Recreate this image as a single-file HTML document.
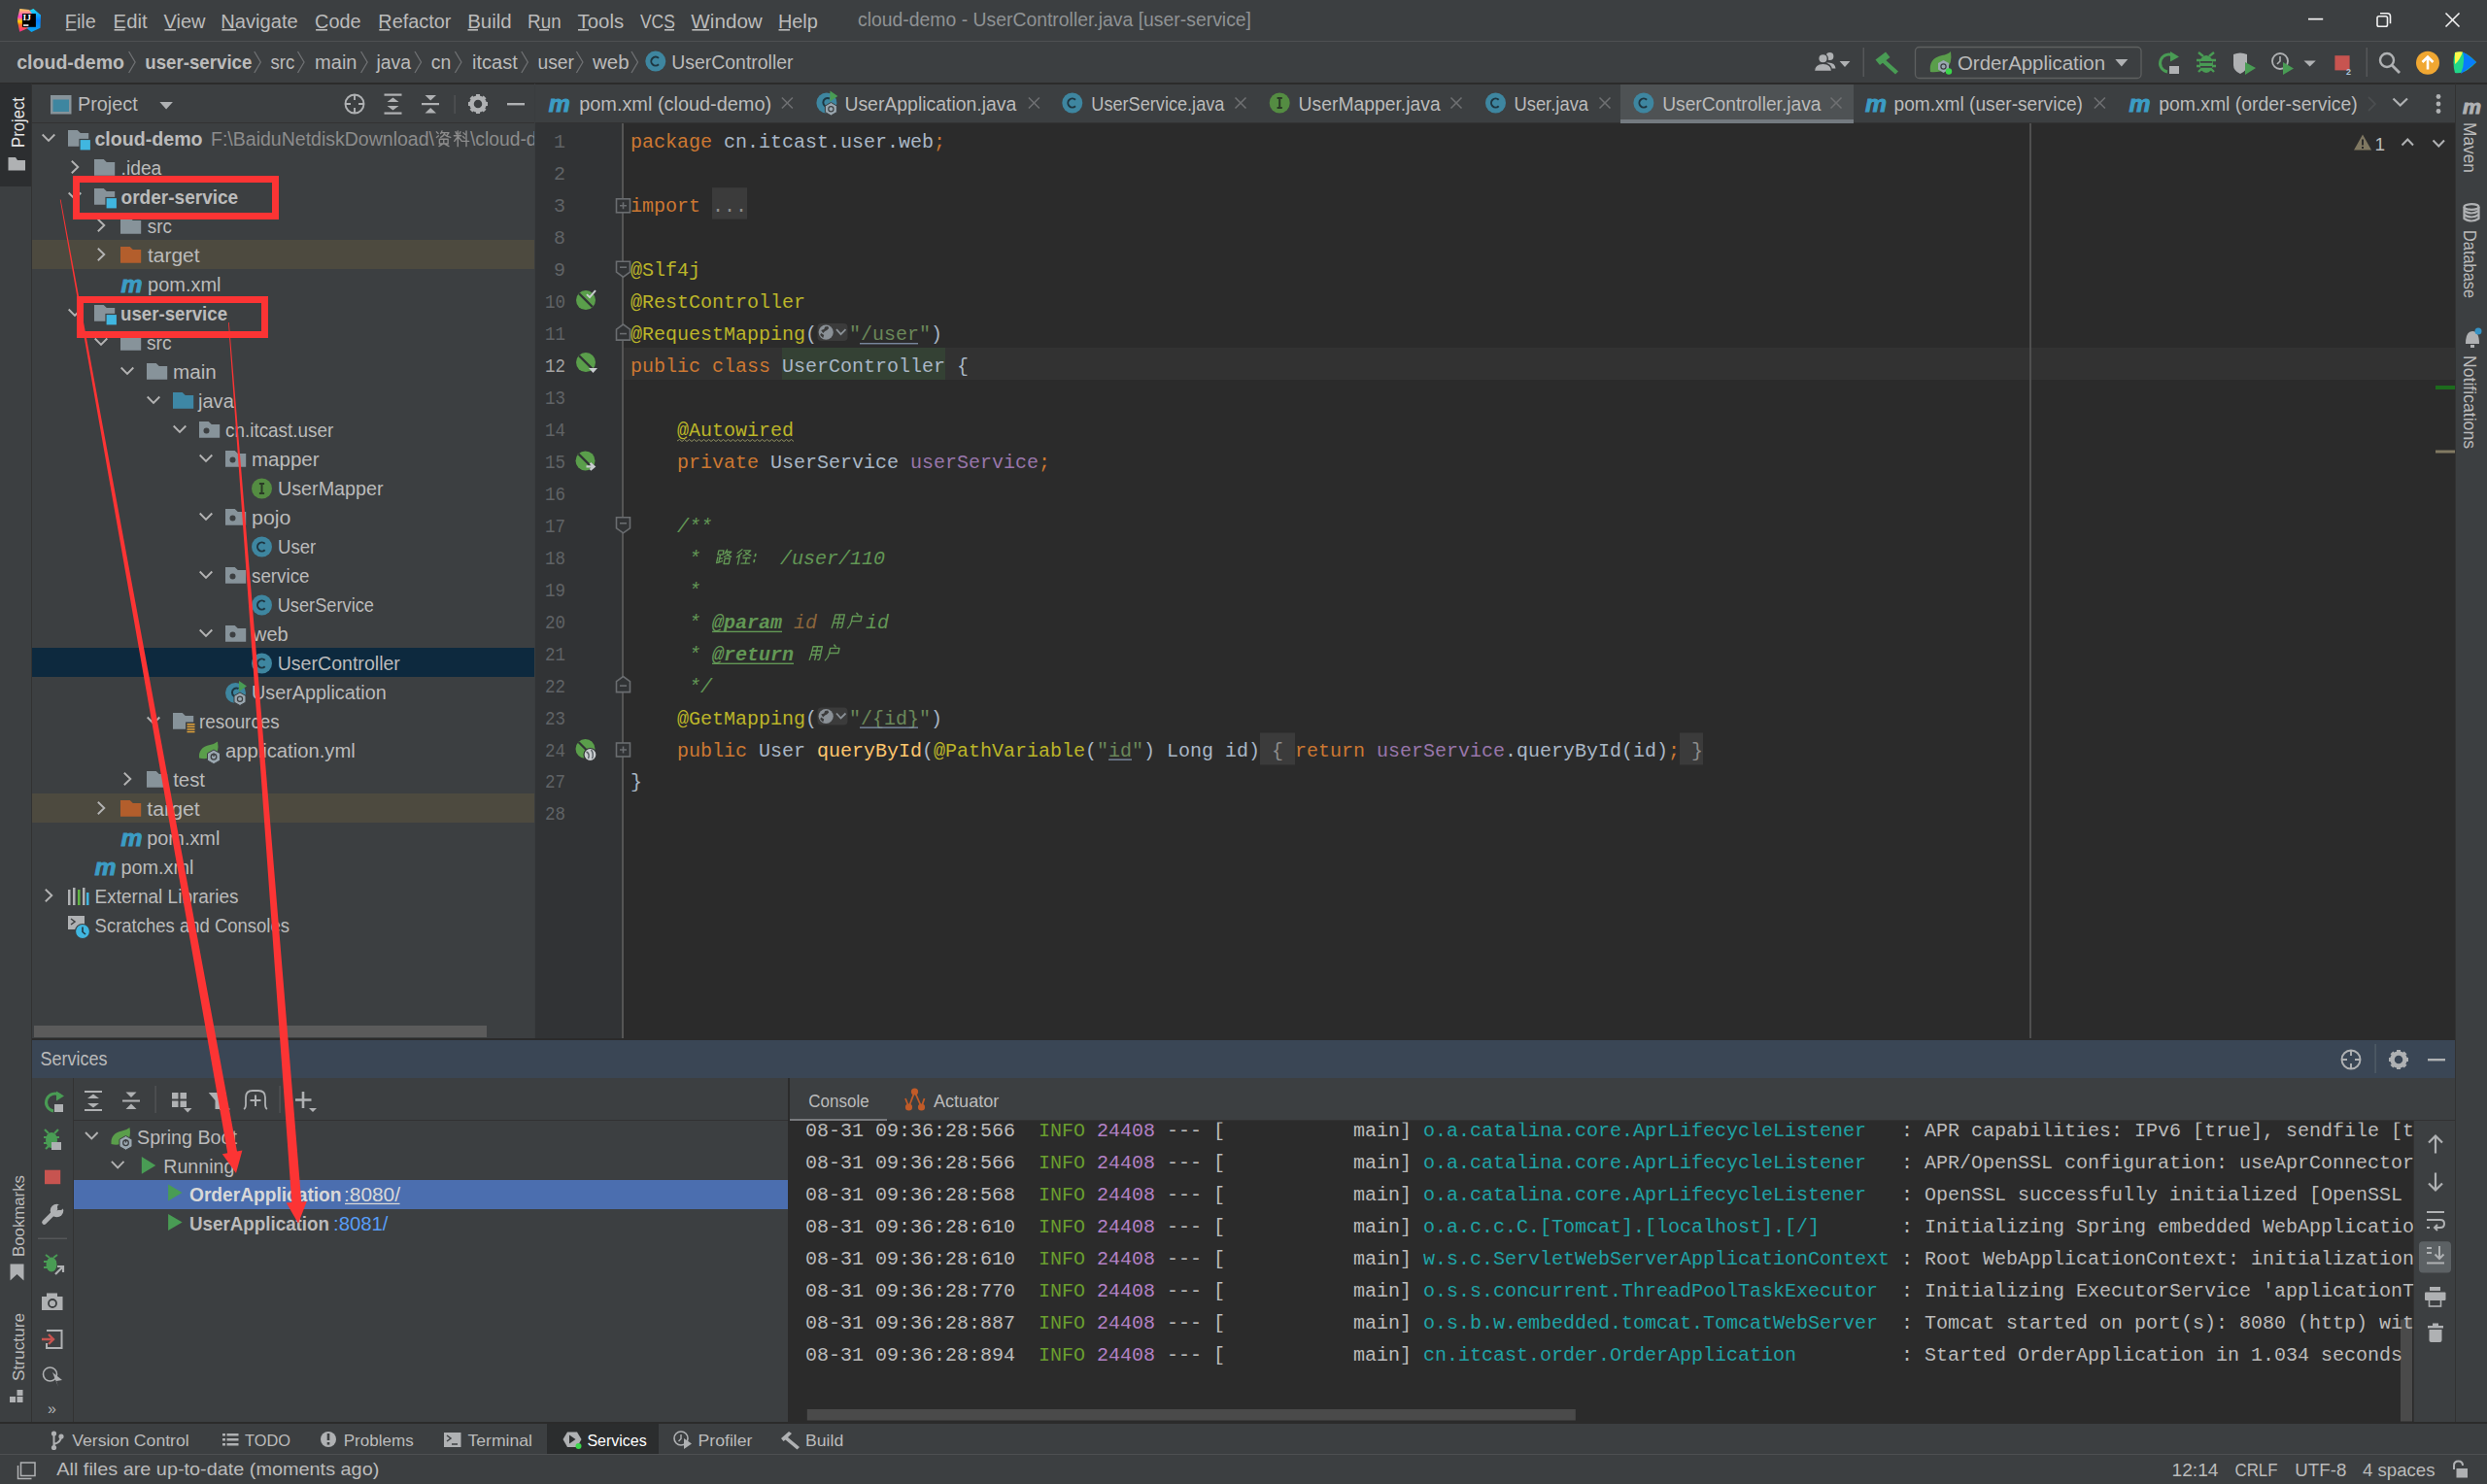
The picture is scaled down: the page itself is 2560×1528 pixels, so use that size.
<!DOCTYPE html>
<html><head><meta charset="utf-8"><title>IntelliJ</title>
<style>
html,body{margin:0;padding:0;background:#3C3F41;overflow:hidden}
svg{display:block}
.s{font-family:"Liberation Sans",sans-serif;white-space:pre}
.m{font-family:"Liberation Mono",monospace;white-space:pre}
</style></head>
<body>
<svg width="2560" height="1528" viewBox="0 0 2560 1528">
<rect x="0" y="0" width="2560" height="1528" fill="#3C3F41" />
<rect x="0" y="42" width="2560" height="1" fill="#4E5052" />
<rect x="0" y="85" width="2560" height="2" fill="#2B2B2B" />
<rect x="32" y="86" width="1" height="1379" fill="#323232" />
<rect x="0" y="86" width="32" height="106" fill="#2C2E30" />
<rect x="2527" y="86" width="1" height="1379" fill="#323232" />
<rect x="33" y="126" width="517" height="1" fill="#323232" />
<rect x="550" y="86" width="1" height="983" fill="#3A3D3F" />
<rect x="551" y="126" width="1976" height="1" fill="#323232" />
<rect x="551" y="127" width="1976" height="942" fill="#2B2B2B" />
<rect x="551" y="127" width="89" height="942" fill="#313335" />
<rect x="640" y="127" width="2" height="942" fill="#555555" />
<rect x="642" y="358" width="1885" height="33" fill="#323232" />
<rect x="2089" y="127" width="2" height="942" fill="#4F4F4F" />
<rect x="33" y="1069" width="2494" height="2" fill="#2B2B2B" />
<rect x="33" y="1071" width="2494" height="39" fill="#3A4655" />
<rect x="0" y="1464" width="2560" height="2" fill="#2B2B2B" />
<rect x="0" y="1497" width="2560" height="1" fill="#4E5052" />
<rect x="75" y="1110" width="1" height="354" fill="#323232" />
<rect x="76" y="1153" width="735" height="1" fill="#323232" />
<rect x="811" y="1110" width="2" height="354" fill="#2B2B2B" />
<rect x="813" y="1153" width="1714" height="1" fill="#323232" />
<rect x="813" y="1152" width="100" height="3" fill="#787A7D" />
<rect x="813" y="1154" width="1672" height="310" fill="#2B2B2B" />
<rect x="2484" y="1154" width="1" height="310" fill="#323232" />
<defs><linearGradient id="lgB" x1="0" y1="0" x2="0" y2="1"><stop offset="0" stop-color="#1EE0F5"/><stop offset="0.5" stop-color="#087CFA"/><stop offset="1" stop-color="#0AA8F0"/></linearGradient><linearGradient id="lgP" x1="0" y1="0" x2="0" y2="1"><stop offset="0" stop-color="#FFD15A"/><stop offset="0.35" stop-color="#FE3BD0"/><stop offset="0.55" stop-color="#FFD600"/><stop offset="0.7" stop-color="#FF6A2B"/><stop offset="1" stop-color="#FE2890"/></linearGradient></defs><path d="M27.5 12 L34.4 9 L42 15.5 L41.5 28.7 L32.3 33 L27.5 29 Z" fill="url(#lgB)"/><path d="M20.4 9 L30 10 L33 14 L23 14.5 L23 28 L30 28.5 L20.2 32.8 L18.1 22.3 L18.1 18.4 Z" fill="url(#lgP)"/><rect x="22.9" y="14.1" width="14" height="13.7" fill="#000"/><text x="23.6" y="21.4" font-family="Liberation Serif" font-weight="700" font-size="8.6" fill="#fff" textLength="8.4" lengthAdjust="spacingAndGlyphs">IJ</text><rect x="24" y="25.2" width="5.4" height="1.7" fill="#E8E8E8"/>
<text class="s" x="66.8" y="29" font-size="19.3" fill="#BBBBBB"  textLength="32" lengthAdjust="spacingAndGlyphs">File</text>
<text class="s" x="116.6" y="29" font-size="19.3" fill="#BBBBBB"  textLength="35" lengthAdjust="spacingAndGlyphs">Edit</text>
<text class="s" x="168.5" y="29" font-size="19.3" fill="#BBBBBB"  textLength="43" lengthAdjust="spacingAndGlyphs">View</text>
<text class="s" x="227.3" y="29" font-size="19.3" fill="#BBBBBB"  textLength="79.4" lengthAdjust="spacingAndGlyphs">Navigate</text>
<text class="s" x="324.1" y="29" font-size="19.3" fill="#BBBBBB"  textLength="47.5" lengthAdjust="spacingAndGlyphs">Code</text>
<text class="s" x="389.3" y="29" font-size="19.3" fill="#BBBBBB"  textLength="75" lengthAdjust="spacingAndGlyphs">Refactor</text>
<text class="s" x="481.2" y="29" font-size="19.3" fill="#BBBBBB"  textLength="45.5" lengthAdjust="spacingAndGlyphs">Build</text>
<text class="s" x="543.1" y="29" font-size="19.3" fill="#BBBBBB"  textLength="34.5" lengthAdjust="spacingAndGlyphs">Run</text>
<text class="s" x="594.6" y="29" font-size="19.3" fill="#BBBBBB"  textLength="47.5" lengthAdjust="spacingAndGlyphs">Tools</text>
<text class="s" x="658.9" y="29" font-size="19.3" fill="#BBBBBB"  textLength="36" lengthAdjust="spacingAndGlyphs">VCS</text>
<text class="s" x="711.3" y="29" font-size="19.3" fill="#BBBBBB"  textLength="73.5" lengthAdjust="spacingAndGlyphs">Window</text>
<text class="s" x="800.9" y="29" font-size="19.3" fill="#BBBBBB"  textLength="41" lengthAdjust="spacingAndGlyphs">Help</text>
<rect x="67.8" y="30" width="10.700000000000003" height="1.6" fill="#BBBBBB" />
<rect x="117.6" y="30" width="10.900000000000006" height="1.6" fill="#BBBBBB" />
<rect x="169.5" y="30" width="11.5" height="1.6" fill="#BBBBBB" />
<rect x="228.3" y="30" width="14.699999999999989" height="1.6" fill="#BBBBBB" />
<rect x="325.1" y="30" width="11.899999999999977" height="1.6" fill="#BBBBBB" />
<rect x="390.3" y="30" width="10.699999999999989" height="1.6" fill="#BBBBBB" />
<rect x="481.5" y="30" width="10.5" height="1.6" fill="#BBBBBB" />
<rect x="555" y="30" width="10" height="1.6" fill="#BBBBBB" />
<rect x="595" y="30" width="11" height="1.6" fill="#BBBBBB" />
<rect x="684" y="30" width="10" height="1.6" fill="#BBBBBB" />
<rect x="712.3" y="30" width="17.700000000000045" height="1.6" fill="#BBBBBB" />
<rect x="801.5" y="30" width="11.5" height="1.6" fill="#BBBBBB" />
<text class="s" x="883" y="26.6" font-size="19.3" fill="#8F9294"  textLength="405" lengthAdjust="spacingAndGlyphs">cloud-demo - UserController.java [user-service]</text>
<rect x="2376" y="18.8" width="15.2" height="1.7" fill="#F2F2F2" />
<g fill="none" stroke="#F2F2F2" stroke-width="1.6"><rect x="2447" y="16.8" width="10.5" height="10.5" rx="1.8"/><path d="M2450 13.8 H2457.5 Q2460.5 13.8 2460.5 16.8 V24.2"/></g>
<line x1="2517.5" y1="13.5" x2="2531.5" y2="27.5" stroke="#F2F2F2" stroke-width="1.6" />
<line x1="2531.5" y1="13.5" x2="2517.5" y2="27.5" stroke="#F2F2F2" stroke-width="1.6" />
<text class="s" x="17.2" y="70.7" font-size="19.3" fill="#BBBBBB" font-weight="700"  textLength="110.8" lengthAdjust="spacingAndGlyphs">cloud-demo</text>
<text class="s" x="149.3" y="70.7" font-size="19.3" fill="#BBBBBB" font-weight="700"  textLength="110.09999999999997" lengthAdjust="spacingAndGlyphs">user-service</text>
<text class="s" x="278.5" y="70.7" font-size="19.3" fill="#BBBBBB"  textLength="24.80000000000001" lengthAdjust="spacingAndGlyphs">src</text>
<text class="s" x="324.1" y="70.7" font-size="19.3" fill="#BBBBBB"  textLength="43.39999999999998" lengthAdjust="spacingAndGlyphs">main</text>
<text class="s" x="387.4" y="70.7" font-size="19.3" fill="#BBBBBB"  textLength="35.60000000000002" lengthAdjust="spacingAndGlyphs">java</text>
<text class="s" x="443.8" y="70.7" font-size="19.3" fill="#BBBBBB"  textLength="20.5" lengthAdjust="spacingAndGlyphs">cn</text>
<text class="s" x="486" y="70.7" font-size="19.3" fill="#BBBBBB"  textLength="46.700000000000045" lengthAdjust="spacingAndGlyphs">itcast</text>
<text class="s" x="553.5" y="70.7" font-size="19.3" fill="#BBBBBB"  textLength="37.5" lengthAdjust="spacingAndGlyphs">user</text>
<text class="s" x="610.1" y="70.7" font-size="19.3" fill="#BBBBBB"  textLength="37.5" lengthAdjust="spacingAndGlyphs">web</text>
<path d="M132.6 53 L139.1 64 L132.6 75" fill="none" stroke="#6F7173" stroke-width="1.3" />
<path d="M261.8 53 L268.3 64 L261.8 75" fill="none" stroke="#6F7173" stroke-width="1.3" />
<path d="M306.5 53 L313.0 64 L306.5 75" fill="none" stroke="#6F7173" stroke-width="1.3" />
<path d="M371.6 53 L378.1 64 L371.6 75" fill="none" stroke="#6F7173" stroke-width="1.3" />
<path d="M427 53 L433.5 64 L427 75" fill="none" stroke="#6F7173" stroke-width="1.3" />
<path d="M468.4 53 L474.9 64 L468.4 75" fill="none" stroke="#6F7173" stroke-width="1.3" />
<path d="M536.8 53 L543.3 64 L536.8 75" fill="none" stroke="#6F7173" stroke-width="1.3" />
<path d="M593.4 53 L599.9 64 L593.4 75" fill="none" stroke="#6F7173" stroke-width="1.3" />
<path d="M650 53 L656.5 64 L650 75" fill="none" stroke="#6F7173" stroke-width="1.3" />
<circle cx="674.8" cy="63.1" r="10.5" fill="#3E86A0"/>
<path d="M678.0 59.9 A4.5 4.5 0 1 0 678.0 66.3" fill="none" stroke="#1E3641" stroke-width="2"/>
<text class="s" x="691.2" y="70.7" font-size="19.3" fill="#BBBBBB"  textLength="125.3" lengthAdjust="spacingAndGlyphs">UserController</text>
<g fill="#AFB1B3"><circle cx="1883.5" cy="58" r="3.9"/><path d="M1880 64.5 Q1889 63.5 1889.5 70.5 H1883 Z"/><circle cx="1876.5" cy="60.3" r="4.8" stroke="#3C3F41" stroke-width="1.4"/><path d="M1867.3 73.5 Q1867.5 65.3 1876.5 65.3 Q1885.5 65.3 1885.7 73.5 Z" stroke="#3C3F41" stroke-width="1.4"/></g>
<path d="M1893.6 63 H1904.4 L1899 69 Z" fill="#AFB1B3" />
<rect x="1917.5" y="49" width="1.5" height="30" fill="#555759" />
<g fill="#499C54"><path d="M1930.5 61.5 L1941 53.5 L1945.5 59 L1935 67 Z"/><path d="M1939 60 L1954 73.5 L1951 76.5 L1936 63 Z"/></g>
<rect x="1971.5" y="48.5" width="232.5" height="32" rx="4" ry="4" fill="none" stroke="#5E6060" stroke-width="1.3"/>
<g><path d="M1987 74 Q1985 60 1999 57 Q2005 56 2008 53 Q2010 66 2003 71 Q1996 75 1987 74 Z" fill="#5A9E4B"/><path d="M2000.5 62 L2006 65 V71.5 L2000.5 75 L1995 71.5 V65 Z" fill="#9AA7B0"/><circle cx="2000.5" cy="68.5" r="2.6" fill="none" stroke="#3C3F41" stroke-width="1.2"/><circle cx="2006" cy="73.5" r="3.2" fill="#3BD64A"/></g>
<text class="s" x="2015" y="71.7" font-size="19.3" fill="#BBBBBB"  textLength="152" lengthAdjust="spacingAndGlyphs">OrderApplication</text>
<path d="M2177.3 61 H2190.3 L2183.8 68.5 Z" fill="#AFB1B3" />
<g><path d="M2238 58 A9 9 0 1 0 2231 74" fill="none" stroke="#499C54" stroke-width="3"/><path d="M2234 53 L2243 58.5 L2234 63.5 Z" fill="#499C54"/><rect x="2233" y="68" width="10" height="8" fill="#AFB1B3"/></g>
<g fill="#499C54"><ellipse cx="2271" cy="66" rx="7" ry="9"/><path d="M2263 54 L2268 58 M2279 54 L2274 58 M2261 62 H2281 M2261 68 H2281 M2263 74 L2266 71 M2279 74 L2276 71" stroke="#499C54" stroke-width="2.4"/><rect x="2265" y="63" width="12" height="1.8" fill="#3C3F41"/><rect x="2265" y="68" width="12" height="1.8" fill="#3C3F41"/></g>
<g><path d="M2299 56 Q2306 53 2313 56 V67 Q2313 73 2306 76 Q2299 73 2299 67 Z" fill="#AFB1B3"/><path d="M2311 64 L2322 70 L2311 77 Z" fill="#499C54"/></g>
<g><circle cx="2347" cy="63" r="8" fill="none" stroke="#AFB1B3" stroke-width="1.8"/><path d="M2347 58 V63 L2344 66" fill="none" stroke="#AFB1B3" stroke-width="1.6"/><path d="M2350 64 L2361 70.5 L2350 77 Z" fill="#499C54"/></g>
<path d="M2371.5 62.5 H2383.8 L2377.6 68.5 Z" fill="#AFB1B3" />
<rect x="2403.4" y="57.2" width="15.2" height="15.2" fill="#C75450" />
<text class="s" x="2415" y="77" font-size="9" fill="#A9C4D9" font-weight="700" >2</text>
<rect x="2435.5" y="49" width="1.5" height="30" fill="#555759" />
<circle cx="2457" cy="62" r="7" fill="none" stroke="#AFB1B3" stroke-width="2.4"/>
<line x1="2462" y1="67" x2="2470" y2="75" stroke="#AFB1B3" stroke-width="2.8" />
<circle cx="2499" cy="64.8" r="12" fill="#F0A732"/>
<path d="M2499 71.5 V59 M2493.5 64 L2499 58.5 L2504.5 64" fill="none" stroke="#FFFFFF" stroke-width="2.6" />
<g><path d="M2527 54 Q2537 51 2549 64 Q2537 77 2527 75 Q2524 64 2527 54 Z" fill="#21D789"/><path d="M2535 53.5 Q2542 57 2549 64 Q2541 71 2533 76 Q2538 64 2535 53.5 Z" fill="#087CFA"/><path d="M2527 54 Q2531 53 2535 53.5 Q2532 62 2527 66 Z" fill="#FCF84A"/></g>
<text class="s" font-size="17.5" fill="#E6E6E6" transform="translate(25,152) rotate(-90)" textLength="52" lengthAdjust="spacingAndGlyphs">Project</text>
<path d="M8.5 162 H16 L18 165 H26 V175.5 H8.5 Z" fill="#AFB1B3" />
<text class="s" font-size="17" fill="#BBBBBB" transform="translate(25,1294) rotate(-90)" textLength="84" lengthAdjust="spacingAndGlyphs">Bookmarks</text>
<path d="M10.5 1301.5 H24.5 V1318.5 L17.5 1312 L10.5 1318.5 Z" fill="#AFB1B3" />
<text class="s" font-size="17" fill="#BBBBBB" transform="translate(25,1422) rotate(-90)" textLength="70" lengthAdjust="spacingAndGlyphs">Structure</text>
<g fill="#AFB1B3"><rect x="10" y="1438" width="6" height="6"/><rect x="17.5" y="1438" width="6" height="6"/><rect x="17.5" y="1431" width="6" height="6"/></g>
<text class="s" font-size="20" font-weight="700" font-style="italic" fill="#AFB1B3" stroke="#AFB1B3" stroke-width="0.9" x="2535" y="117" textLength="19" lengthAdjust="spacingAndGlyphs">m</text>
<text class="s" font-size="17.5" fill="#BBBBBB" transform="translate(2536,126) rotate(90)" textLength="52" lengthAdjust="spacingAndGlyphs">Maven</text>
<g fill="none" stroke="#AFB1B3" stroke-width="2.2"><ellipse cx="2544" cy="213" rx="7.5" ry="2.8"/><path d="M2536.5 213 V225 Q2544 230 2551.5 225 V213"/><path d="M2536.5 217 Q2544 222 2551.5 217 M2536.5 221 Q2544 226 2551.5 221"/></g>
<text class="s" font-size="17.5" fill="#BBBBBB" transform="translate(2536,237) rotate(90)" textLength="70" lengthAdjust="spacingAndGlyphs">Database</text>
<g><path d="M2538 354 Q2538 341 2545 341 Q2552 341 2552 354 Z" fill="#AFB1B3"/><rect x="2543" y="355" width="4" height="3" fill="#AFB1B3"/><circle cx="2551" cy="341" r="3.5" fill="#3592C4"/></g>
<text class="s" font-size="17.5" fill="#BBBBBB" transform="translate(2536,366) rotate(90)" textLength="96" lengthAdjust="spacingAndGlyphs">Notifications</text>
<g><rect x="52" y="98" width="21.5" height="19.5" fill="#87939A"/><rect x="54.5" y="102.5" width="16.5" height="12.5" fill="#3E86A0"/></g>
<text class="s" x="80" y="114.1" font-size="19.3" fill="#BBBBBB"  textLength="61.7" lengthAdjust="spacingAndGlyphs">Project</text>
<path d="M164.4 105 H177.9 L171.1 112.6 Z" fill="#AFB1B3" />
<g fill="none" stroke="#AFB1B3" stroke-width="1.9"><circle cx="365" cy="107" r="9.5"/><path d="M365 97.5 V103 M365 111 V116.5 M355.5 107 H361 M369 107 H374.5"/></g>
<g fill="#AFB1B3"><rect x="395.5" y="96.5" width="18" height="2.2"/><rect x="395.5" y="115.5" width="18" height="2.2"/><path d="M398.5 105 L404.5 100.5 L410.5 105 Z"/><path d="M398.5 109 L404.5 113.5 L410.5 109 Z"/></g>
<g fill="#AFB1B3"><rect x="434" y="106" width="18" height="2.2"/><path d="M437.5 98 H449 L443.2 103.5 Z"/><path d="M437.5 116.5 H449 L443.2 111 Z"/></g>
<rect x="467.5" y="98" width="1.2" height="19" fill="#555759" />
<g transform="translate(492,107)"><circle r="6.5" fill="none" stroke="#AFB1B3" stroke-width="4.5"/><rect x="-2" y="-10" width="4" height="4" fill="#AFB1B3" transform="rotate(0)"/><rect x="-2" y="-10" width="4" height="4" fill="#AFB1B3" transform="rotate(45)"/><rect x="-2" y="-10" width="4" height="4" fill="#AFB1B3" transform="rotate(90)"/><rect x="-2" y="-10" width="4" height="4" fill="#AFB1B3" transform="rotate(135)"/><rect x="-2" y="-10" width="4" height="4" fill="#AFB1B3" transform="rotate(180)"/><rect x="-2" y="-10" width="4" height="4" fill="#AFB1B3" transform="rotate(225)"/><rect x="-2" y="-10" width="4" height="4" fill="#AFB1B3" transform="rotate(270)"/><rect x="-2" y="-10" width="4" height="4" fill="#AFB1B3" transform="rotate(315)"/><circle r="2.5" fill="#3C3F41"/></g>
<rect x="522" y="106" width="18" height="2.4" fill="#AFB1B3" />
<rect x="1668" y="87" width="240" height="36" fill="#4E5254" />
<rect x="1668" y="123" width="240" height="4" fill="#747A80" />
<text class="s" x="564.8" y="115" font-size="23" font-weight="700" font-style="italic" fill="#3B9CC4" stroke="#3B9CC4" stroke-width="0.9" textLength="22" lengthAdjust="spacingAndGlyphs">m</text>
<text class="s" x="596.2" y="114.1" font-size="19.3" fill="#BBBBBB"  textLength="197.89999999999998" lengthAdjust="spacingAndGlyphs">pom.xml (cloud-demo)</text>
<line x1="804.9" y1="100.5" x2="815.9" y2="111.5" stroke="#6E7072" stroke-width="1.6" />
<line x1="815.9" y1="100.5" x2="804.9" y2="111.5" stroke="#6E7072" stroke-width="1.6" />
<circle cx="850.9" cy="106.0" r="10.5" fill="#3E86A0"/>
<path d="M853.9 101.5 A4.5 4.5 0 1 0 853.9 109.5" fill="none" stroke="#1E3641" stroke-width="2"/>
<path d="M854.4 93.5 L862.4 99.0 L854.4 104.5 Z" fill="#499C54"/>
<path d="M855.4 105.5 L861.4 109.0 V115.5 L855.4 119.0 L849.4 115.5 V109.0 Z" fill="#9AA7B0" stroke="#3C3F41" stroke-width="1"/>
<circle cx="855.4" cy="112.3" r="2.6" fill="none" stroke="#3C3F41" stroke-width="1.2"/>
<text class="s" x="869.4" y="114.1" font-size="19.3" fill="#BBBBBB"  textLength="176.89999999999998" lengthAdjust="spacingAndGlyphs">UserApplication.java</text>
<line x1="1058.9" y1="100.5" x2="1069.9" y2="111.5" stroke="#6E7072" stroke-width="1.6" />
<line x1="1069.9" y1="100.5" x2="1058.9" y2="111.5" stroke="#6E7072" stroke-width="1.6" />
<circle cx="1103.8" cy="106" r="10.5" fill="#3E86A0"/>
<path d="M1107.0 102.8 A4.5 4.5 0 1 0 1107.0 109.2" fill="none" stroke="#1E3641" stroke-width="2"/>
<text class="s" x="1123.3" y="114.1" font-size="19.3" fill="#BBBBBB"  textLength="137.10000000000014" lengthAdjust="spacingAndGlyphs">UserService.java</text>
<line x1="1271.5" y1="100.5" x2="1282.5" y2="111.5" stroke="#6E7072" stroke-width="1.6" />
<line x1="1282.5" y1="100.5" x2="1271.5" y2="111.5" stroke="#6E7072" stroke-width="1.6" />
<circle cx="1317.2" cy="106" r="10.5" fill="#548C42"/>
<path d="M1314.6000000000001 101 H1319.8 M1317.2 101 V111 M1314.6000000000001 111 H1319.8" fill="none" stroke="#2A3A26" stroke-width="2"/>
<text class="s" x="1336.6" y="114.1" font-size="19.3" fill="#BBBBBB"  textLength="146.10000000000014" lengthAdjust="spacingAndGlyphs">UserMapper.java</text>
<line x1="1493.5" y1="100.5" x2="1504.5" y2="111.5" stroke="#6E7072" stroke-width="1.6" />
<line x1="1504.5" y1="100.5" x2="1493.5" y2="111.5" stroke="#6E7072" stroke-width="1.6" />
<circle cx="1539.5" cy="106" r="10.5" fill="#3E86A0"/>
<path d="M1542.7 102.8 A4.5 4.5 0 1 0 1542.7 109.2" fill="none" stroke="#1E3641" stroke-width="2"/>
<text class="s" x="1558.4" y="114.1" font-size="19.3" fill="#BBBBBB"  textLength="76.69999999999982" lengthAdjust="spacingAndGlyphs">User.java</text>
<line x1="1646.5" y1="100.5" x2="1657.5" y2="111.5" stroke="#6E7072" stroke-width="1.6" />
<line x1="1657.5" y1="100.5" x2="1646.5" y2="111.5" stroke="#6E7072" stroke-width="1.6" />
<circle cx="1691.9" cy="106" r="10.5" fill="#3E86A0"/>
<path d="M1695.1000000000001 102.8 A4.5 4.5 0 1 0 1695.1000000000001 109.2" fill="none" stroke="#1E3641" stroke-width="2"/>
<text class="s" x="1711.2" y="114.1" font-size="19.3" fill="#BBBBBB"  textLength="163.29999999999995" lengthAdjust="spacingAndGlyphs">UserController.java</text>
<line x1="1884.5" y1="100.5" x2="1895.5" y2="111.5" stroke="#6E7072" stroke-width="1.6" />
<line x1="1895.5" y1="100.5" x2="1884.5" y2="111.5" stroke="#6E7072" stroke-width="1.6" />
<text class="s" x="1920" y="115" font-size="23" font-weight="700" font-style="italic" fill="#3B9CC4" stroke="#3B9CC4" stroke-width="0.9" textLength="22" lengthAdjust="spacingAndGlyphs">m</text>
<text class="s" x="1949.5" y="114.1" font-size="19.3" fill="#BBBBBB"  textLength="194.5" lengthAdjust="spacingAndGlyphs">pom.xml (user-service)</text>
<line x1="2155.9" y1="100.5" x2="2166.9" y2="111.5" stroke="#6E7072" stroke-width="1.6" />
<line x1="2166.9" y1="100.5" x2="2155.9" y2="111.5" stroke="#6E7072" stroke-width="1.6" />
<text class="s" x="2191.4" y="115" font-size="23" font-weight="700" font-style="italic" fill="#3B9CC4" stroke="#3B9CC4" stroke-width="0.9" textLength="22" lengthAdjust="spacingAndGlyphs">m</text>
<text class="s" x="2222.2" y="114.1" font-size="19.3" fill="#BBBBBB"  textLength="204.60000000000036" lengthAdjust="spacingAndGlyphs">pom.xml (order-service)</text>
<path d="M2438 100 L2445 107 L2438 114" fill="none" stroke="#4A4D4F" stroke-width="1.8" />
<path d="M2463.5 101.5 L2470.7 108.5 L2478 101.5" fill="none" stroke="#AFB1B3" stroke-width="2.2" />
<g fill="#AFB1B3"><circle cx="2510" cy="99.5" r="2.4"/><circle cx="2510" cy="107" r="2.4"/><circle cx="2510" cy="114.5" r="2.4"/></g>
<text class="m" x="582" y="152.4" font-size="20" fill="#606366" text-anchor="end">1</text>
<text class="m" x="582" y="185.4" font-size="20" fill="#606366" text-anchor="end">2</text>
<text class="m" x="582" y="218.3" font-size="20" fill="#606366" text-anchor="end">3</text>
<text class="m" x="582" y="251.2" font-size="20" fill="#606366" text-anchor="end">8</text>
<text class="m" x="582" y="284.2" font-size="20" fill="#606366" text-anchor="end">9</text>
<text class="m" x="582" y="317.1" font-size="20" fill="#606366" text-anchor="end" textLength="21" lengthAdjust="spacingAndGlyphs">10</text>
<text class="m" x="582" y="350.1" font-size="20" fill="#606366" text-anchor="end" textLength="21" lengthAdjust="spacingAndGlyphs">11</text>
<text class="m" x="582" y="383.1" font-size="20" fill="#A4A3A3" text-anchor="end" textLength="21" lengthAdjust="spacingAndGlyphs">12</text>
<text class="m" x="582" y="416.0" font-size="20" fill="#606366" text-anchor="end" textLength="21" lengthAdjust="spacingAndGlyphs">13</text>
<text class="m" x="582" y="449.0" font-size="20" fill="#606366" text-anchor="end" textLength="21" lengthAdjust="spacingAndGlyphs">14</text>
<text class="m" x="582" y="481.9" font-size="20" fill="#606366" text-anchor="end" textLength="21" lengthAdjust="spacingAndGlyphs">15</text>
<text class="m" x="582" y="514.9" font-size="20" fill="#606366" text-anchor="end" textLength="21" lengthAdjust="spacingAndGlyphs">16</text>
<text class="m" x="582" y="547.8" font-size="20" fill="#606366" text-anchor="end" textLength="21" lengthAdjust="spacingAndGlyphs">17</text>
<text class="m" x="582" y="580.8" font-size="20" fill="#606366" text-anchor="end" textLength="21" lengthAdjust="spacingAndGlyphs">18</text>
<text class="m" x="582" y="613.7" font-size="20" fill="#606366" text-anchor="end" textLength="21" lengthAdjust="spacingAndGlyphs">19</text>
<text class="m" x="582" y="646.7" font-size="20" fill="#606366" text-anchor="end" textLength="21" lengthAdjust="spacingAndGlyphs">20</text>
<text class="m" x="582" y="679.6" font-size="20" fill="#606366" text-anchor="end" textLength="21" lengthAdjust="spacingAndGlyphs">21</text>
<text class="m" x="582" y="712.6" font-size="20" fill="#606366" text-anchor="end" textLength="21" lengthAdjust="spacingAndGlyphs">22</text>
<text class="m" x="582" y="745.5" font-size="20" fill="#606366" text-anchor="end" textLength="21" lengthAdjust="spacingAndGlyphs">23</text>
<text class="m" x="582" y="778.5" font-size="20" fill="#606366" text-anchor="end" textLength="21" lengthAdjust="spacingAndGlyphs">24</text>
<text class="m" x="582" y="811.4" font-size="20" fill="#606366" text-anchor="end" textLength="21" lengthAdjust="spacingAndGlyphs">27</text>
<text class="m" x="582" y="844.4" font-size="20" fill="#606366" text-anchor="end" textLength="21" lengthAdjust="spacingAndGlyphs">28</text>
<rect x="733.0" y="193.2" width="36" height="32.4" fill="#3B3B3B" />
<rect x="805.0" y="358" width="168" height="33" fill="#344134" />
<rect x="1297.0" y="754.5" width="36" height="33" fill="#3B3B3B" />
<rect x="1729.0" y="754.5" width="24" height="33" fill="#3B3B3B" />
<text class="m" y="152.4" font-size="20"><tspan x="649.0" fill="#CC7832">package</tspan><tspan x="733.0" fill="#A9B7C6"> cn.itcast.user.web</tspan><tspan x="961.0" fill="#CC7832">;</tspan></text>
<text class="m" y="218.3" font-size="20"><tspan x="649.0" fill="#CC7832">import</tspan><tspan x="721.0" fill="#A9B7C6"> </tspan><tspan x="733.0" fill="#8C8C8C">...</tspan></text>
<text class="m" y="284.2" font-size="20"><tspan x="649.0" fill="#BBB529">@Slf4j</tspan></text>
<text class="m" y="317.1" font-size="20"><tspan x="649.0" fill="#BBB529">@RestController</tspan></text>
<text class="m" y="350.1" font-size="20"><tspan x="649.0" fill="#BBB529">@RequestMapping</tspan><tspan x="829.0" fill="#A9B7C6">(</tspan></text>
<rect x="841.5" y="333.1" width="31" height="18" rx="4" fill="#3B3B3B"/>
<circle cx="850.2" cy="342.1" r="7.6" fill="#8A9096"/>
<path d="M845.2 340.1 L848.2 339.1 L849.2 336.6 L852.2 336.1 L853.2 338.1 L851.2 340.1 L849.2 341.1 L847.2 343.1 Z M845.2 343.1 L848.2 345.1 L847.2 348.1 L844.2 345.1 Z" fill="#3B3B3B"/>
<path d="M861.0 339.1 L865.5 344.1 L870.5 339.1" stroke="#8A9096" stroke-width="1.8" fill="none"/>
<text class="m" y="350.1" font-size="20"><tspan x="874.0" fill="#6A8759">"</tspan><tspan fill="#6A8759">/user</tspan><tspan fill="#6A8759">"</tspan><tspan fill="#A9B7C6">)</tspan></text>
<rect x="885.0" y="353.1" width="60" height="1.3" fill="#8090A8" />
<text class="m" y="383.1" font-size="20"><tspan x="649.0" fill="#CC7832">public</tspan><tspan x="721.0" fill="#A9B7C6"> </tspan><tspan x="733.0" fill="#CC7832">class</tspan><tspan x="793.0" fill="#A9B7C6"> UserController {</tspan></text>
<text class="m" y="449.0" font-size="20"><tspan x="649.0" fill="#A9B7C6">    </tspan><tspan x="697.0" fill="#BBB529">@Autowired</tspan></text>
<path d="M697.0 454.0 L699.5 452.5 L702.0 454.5 L704.5 452.5 L707.0 454.5 L709.5 452.5 L712.0 454.5 L714.5 452.5 L717.0 454.5 L719.5 452.5 L722.0 454.5 L724.5 452.5 L727.0 454.5 L729.5 452.5 L732.0 454.5 L734.5 452.5 L737.0 454.5 L739.5 452.5 L742.0 454.5 L744.5 452.5 L747.0 454.5 L749.5 452.5 L752.0 454.5 L754.5 452.5 L757.0 454.5 L759.5 452.5 L762.0 454.5 L764.5 452.5 L767.0 454.5 L769.5 452.5 L772.0 454.5 L774.5 452.5 L777.0 454.5 L779.5 452.5 L782.0 454.5 L784.5 452.5 L787.0 454.5 L789.5 452.5 L792.0 454.5 L794.5 452.5 L797.0 454.5 L799.5 452.5 L802.0 454.5 L804.5 452.5 L807.0 454.5 L809.5 452.5 L812.0 454.5 L814.5 452.5 L817.0 454.5" fill="none" stroke="#8F8F60" stroke-width="1" />
<text class="m" y="481.9" font-size="20"><tspan x="649.0" fill="#A9B7C6">    </tspan><tspan x="697.0" fill="#CC7832">private</tspan><tspan x="781.0" fill="#A9B7C6"> UserService </tspan><tspan x="937.0" fill="#9876AA">userService</tspan><tspan x="1069.0" fill="#CC7832">;</tspan></text>
<text class="m" y="547.8" font-size="20"><tspan x="649.0" fill="#A9B7C6">    </tspan><tspan x="697.0" fill="#629755" font-style="italic">/**</tspan></text>
<text class="m" y="580.8" font-size="20" font-style="italic" fill="#629755"><tspan x="709.0">*</tspan><tspan x="803.0">/user/110</tspan></text>
<path d="M2 2.5 H8 V7.5 H2 Z M5 7.5 V17 M5 12 H8 M2.5 10.5 V17.5 Q5.5 16.5 9 15 M12 1.5 L10 6.5 M11 4 H17.5 Q15.5 8 10 10 M12.5 6 Q14.5 9 18.5 10 M11.5 12 H17.5 V18.5 H11.5 Z" transform="translate(735,581.8) skewX(-12) translate(0,-17) scale(0.85)" fill="none" stroke="#629755" stroke-width="1.6470588235294117" stroke-linecap="round" stroke-linejoin="round"/>
<path d="M6.5 1 L2 5.5 M7 5.5 L2 10.5 M5 8.5 V19 M9 2.5 H17 Q14 7 9.5 9 M11.5 4.5 Q14 7.5 18.5 8.5 M10 11.5 H18 M14 11.5 V18 M9 18 H19" transform="translate(755,581.8) skewX(-12) translate(0,-17) scale(0.85)" fill="none" stroke="#629755" stroke-width="1.6470588235294117" stroke-linecap="round" stroke-linejoin="round"/>
<path d="M4 7 V9 M4 14 V16" transform="translate(772,581.8) skewX(-12) translate(0,-17) scale(0.85)" fill="none" stroke="#629755" stroke-width="2.1176470588235294" stroke-linecap="round" stroke-linejoin="round"/>
<text class="m" y="613.7" font-size="20"><tspan x="649.0" fill="#A9B7C6">     </tspan><tspan x="709.0" fill="#629755" font-style="italic">*</tspan></text>
<text class="m" y="646.7" font-size="20" font-style="italic" fill="#629755"><tspan x="709.0">*</tspan><tspan x="733.0" font-weight="700">@param</tspan><tspan x="817.0" fill="#8A653B">id</tspan><tspan x="891.0">id</tspan></text>
<path d="M3.5 18.5 Q4.5 13 4.5 2.5 H15.5 V17 Q15.5 19 13.5 18.3 M4.5 7.5 H15.5 M4.5 12.5 H15.5 M10 2.5 V18.5" transform="translate(853,647.7) skewX(-12) translate(0,-17) scale(0.85)" fill="none" stroke="#629755" stroke-width="1.6470588235294117" stroke-linecap="round" stroke-linejoin="round"/>
<path d="M8.5 0.5 L10.5 2.5 M4.5 4.5 H15.5 V10.5 H4.5 M4.5 4.5 V11 Q4.5 16 1.5 19" transform="translate(871,647.7) skewX(-12) translate(0,-17) scale(0.85)" fill="none" stroke="#629755" stroke-width="1.6470588235294117" stroke-linecap="round" stroke-linejoin="round"/>
<rect x="733.0" y="649.7" width="72" height="1.4" fill="#629755" />
<text class="m" y="679.6" font-size="20" font-style="italic" fill="#629755"><tspan x="709.0">*</tspan><tspan x="733.0" font-weight="700">@return</tspan></text>
<path d="M3.5 18.5 Q4.5 13 4.5 2.5 H15.5 V17 Q15.5 19 13.5 18.3 M4.5 7.5 H15.5 M4.5 12.5 H15.5 M10 2.5 V18.5" transform="translate(830,680.6) skewX(-12) translate(0,-17) scale(0.85)" fill="none" stroke="#629755" stroke-width="1.6470588235294117" stroke-linecap="round" stroke-linejoin="round"/>
<path d="M8.5 0.5 L10.5 2.5 M4.5 4.5 H15.5 V10.5 H4.5 M4.5 4.5 V11 Q4.5 16 1.5 19" transform="translate(848,680.6) skewX(-12) translate(0,-17) scale(0.85)" fill="none" stroke="#629755" stroke-width="1.6470588235294117" stroke-linecap="round" stroke-linejoin="round"/>
<rect x="733.0" y="682.6" width="84" height="1.4" fill="#629755" />
<text class="m" y="712.6" font-size="20"><tspan x="649.0" fill="#A9B7C6">     </tspan><tspan x="709.0" fill="#629755" font-style="italic">*/</tspan></text>
<text class="m" y="745.5" font-size="20"><tspan x="697.0" fill="#BBB529">@GetMapping</tspan><tspan x="829.0" fill="#A9B7C6">(</tspan></text>
<rect x="841.5" y="728.5" width="31" height="18" rx="4" fill="#3B3B3B"/>
<circle cx="850.2" cy="737.5" r="7.6" fill="#8A9096"/>
<path d="M845.2 735.5 L848.2 734.5 L849.2 732.0 L852.2 731.5 L853.2 733.5 L851.2 735.5 L849.2 736.5 L847.2 738.5 Z M845.2 738.5 L848.2 740.5 L847.2 743.5 L844.2 740.5 Z" fill="#3B3B3B"/>
<path d="M861.0 734.5 L865.5 739.5 L870.5 734.5" stroke="#8A9096" stroke-width="1.8" fill="none"/>
<text class="m" y="745.5" font-size="20"><tspan x="874.0" fill="#6A8759">"/{id}"</tspan><tspan fill="#A9B7C6">)</tspan></text>
<rect x="885.0" y="748.5" width="60" height="1.3" fill="#8090A8" />
<text class="m" y="778.5" font-size="20"><tspan x="649.0" fill="#A9B7C6">    </tspan><tspan x="697.0" fill="#CC7832">public</tspan><tspan x="769.0" fill="#A9B7C6"> User </tspan><tspan x="841.0" fill="#FFC66D">queryById</tspan><tspan x="949.0" fill="#A9B7C6">(</tspan><tspan x="961.0" fill="#BBB529">@PathVariable</tspan><tspan x="1117.0" fill="#A9B7C6">(</tspan><tspan x="1129.0" fill="#6A8759">&quot;id&quot;</tspan><tspan x="1177.0" fill="#A9B7C6">) Long id)</tspan><tspan x="1297.0" fill="#8C8C8C"> { </tspan><tspan x="1333.0" fill="#CC7832">return</tspan><tspan x="1405.0" fill="#A9B7C6"> </tspan><tspan x="1417.0" fill="#9876AA">userService</tspan><tspan x="1549.0" fill="#A9B7C6">.queryById(id)</tspan><tspan x="1717.0" fill="#CC7832">;</tspan><tspan x="1729.0" fill="#8C8C8C"> }</tspan></text>
<rect x="1141.0" y="781.5" width="24" height="1.3" fill="#8090A8" />
<text class="m" y="811.4" font-size="20"><tspan x="649.0" fill="#A9B7C6">}</tspan></text>
<circle cx="603" cy="309.1" r="10" fill="#5A9E4B"/>
<path d="M596 302.1 L610 316.1" stroke="#313335" stroke-width="2.2"/>
<path d="M604 303.1 L607 306.1 L613 299.1" stroke="#C9CDD0" stroke-width="2" fill="none"/>
<circle cx="603" cy="373.1" r="10" fill="#5A9E4B"/>
<path d="M596 366.1 L610 380.1" stroke="#313335" stroke-width="2.2"/>
<path d="M606 379.1 H615 L610.5 384.1 Z" fill="#C9CDD0"/>
<circle cx="602.5" cy="474.4" r="10" fill="#5A9E4B"/>
<path d="M595.5 467.4 L609.5 481.4" stroke="#313335" stroke-width="2.2"/>
<path d="M603.5 480.4 H610.5 M607.5 476.9 L611.5 480.4 L607.5 483.9" stroke="#C9CDD0" stroke-width="2.4" fill="none"/>
<circle cx="602.5" cy="771.0" r="10" fill="#5A9E4B"/>
<path d="M595.5 764.0 L609.5 778.0" stroke="#313335" stroke-width="2.2"/>
<circle cx="607.5" cy="777.0" r="6.5" fill="#C9CDD0" stroke="#313335" stroke-width="1.2"/>
<path d="M603.5 774.0 Q607.5 776.0 605.5 781.0 M608.5 772.0 Q611.5 776.0 609.5 781.0" stroke="#5A6066" stroke-width="1.4" fill="none"/>
<rect x="634.5" y="204.8" width="14" height="14" fill="#313335" stroke="#6A6D70" stroke-width="1.6"/>
<path d="M638 211.8 H645 M641.5 208.3 V215.3" stroke="#6A6D70" stroke-width="1.6"/>
<path d="M634.5 269.2 H648.5 V280.2 L641.5 285.2 L634.5 280.2 Z" fill="#313335" stroke="#6A6D70" stroke-width="1.6"/>
<path d="M638 275.2 H645" stroke="#6A6D70" stroke-width="1.6"/>
<path d="M634.5 350.1 H648.5 V339.1 L641.5 334.1 L634.5 339.1 Z" fill="#313335" stroke="#6A6D70" stroke-width="1.6"/>
<path d="M638 343.6 H645" stroke="#6A6D70" stroke-width="1.6"/>
<path d="M634.5 532.8 H648.5 V543.8 L641.5 548.8 L634.5 543.8 Z" fill="#313335" stroke="#6A6D70" stroke-width="1.6"/>
<path d="M638 538.8 H645" stroke="#6A6D70" stroke-width="1.6"/>
<path d="M634.5 712.6 H648.5 V701.6 L641.5 696.6 L634.5 701.6 Z" fill="#313335" stroke="#6A6D70" stroke-width="1.6"/>
<path d="M638 706.1 H645" stroke="#6A6D70" stroke-width="1.6"/>
<rect x="634.5" y="765.0" width="14" height="14" fill="#313335" stroke="#6A6D70" stroke-width="1.6"/>
<path d="M638 772.0 H645 M641.5 768.5 V775.5" stroke="#6A6D70" stroke-width="1.6"/>
<path d="M2432 138.5 L2441 154.5 H2423 Z" fill="#7F7761" />
<rect x="2431" y="143.5" width="2" height="6" fill="#2B2B2B" />
<rect x="2431" y="151" width="2" height="2" fill="#2B2B2B" />
<text class="s" x="2444.5" y="155" font-size="19" fill="#BBBBBB" >1</text>
<path d="M2472.5 149.5 L2478.3 143.5 L2484 149.5" fill="none" stroke="#AFB1B3" stroke-width="2" />
<path d="M2504.5 144.5 L2510.3 150.5 L2516 144.5" fill="none" stroke="#AFB1B3" stroke-width="2" />
<rect x="2507" y="397" width="20" height="4" fill="#1D6B1D" />
<rect x="2507" y="463.5" width="20" height="3" fill="#827A63" />
<rect x="33" y="247" width="517" height="30" fill="#4D4A3F" />
<rect x="33" y="667" width="517" height="30" fill="#0D293E" />
<rect x="33" y="817" width="517" height="30" fill="#4D4A3F" />
<path d="M43.7 138.5 L50 145.0 L56.3 138.5" fill="none" stroke="#B3B3B3" stroke-width="1.9" />
<path d="M70 134.0 H79.7 L82.8 137.1 H91.2 V150.8 H70 Z" fill="#87939A"/>
<rect x="82" y="143.5" width="11.5" height="11.5" fill="#40B6E0" stroke="#3C3F41" stroke-width="1.2"/>
<text class="s" x="97.4" y="149.5" font-size="19.3" fill="#BBBBBB" font-weight="700"  textLength="111.19999999999999" lengthAdjust="spacingAndGlyphs">cloud-demo</text>
<path d="M73.8 165.7 L80.3 172.0 L73.8 178.3" fill="none" stroke="#B3B3B3" stroke-width="1.9" />
<path d="M97 164.0 H106.7 L109.8 167.1 H118.2 V180.8 H97 Z" fill="#87939A"/>
<text class="s" x="124.6" y="179.5" font-size="19.3" fill="#BBBBBB"  textLength="41.70000000000002" lengthAdjust="spacingAndGlyphs">.idea</text>
<path d="M70.7 198.5 L77 205.0 L83.3 198.5" fill="none" stroke="#B3B3B3" stroke-width="1.9" />
<path d="M97 194.0 H106.7 L109.8 197.1 H118.2 V210.8 H97 Z" fill="#87939A"/>
<rect x="109" y="203.5" width="11.5" height="11.5" fill="#40B6E0" stroke="#3C3F41" stroke-width="1.2"/>
<text class="s" x="124.6" y="209.5" font-size="19.3" fill="#BBBBBB" font-weight="700"  textLength="120.6" lengthAdjust="spacingAndGlyphs">order-service</text>
<path d="M100.8 225.7 L107.3 232.0 L100.8 238.3" fill="none" stroke="#B3B3B3" stroke-width="1.9" />
<path d="M124 224.0 H133.7 L136.8 227.1 H145.2 V240.8 H124 Z" fill="#87939A"/>
<text class="s" x="151.8" y="239.5" font-size="19.3" fill="#BBBBBB"  textLength="25.0" lengthAdjust="spacingAndGlyphs">src</text>
<path d="M100.8 255.7 L107.3 262.0 L100.8 268.3" fill="none" stroke="#B3B3B3" stroke-width="1.9" />
<path d="M124 254.0 H133.7 L136.8 257.1 H145.2 V270.8 H124 Z" fill="#B35E2C"/>
<text class="s" x="152" y="269.5" font-size="19.3" fill="#BBBBBB"  textLength="53.599999999999994" lengthAdjust="spacingAndGlyphs">target</text>
<text class="s" x="124.5" y="300.5" font-size="23" font-weight="700" font-style="italic" fill="#3B9CC4" stroke="#3B9CC4" stroke-width="0.9" textLength="22" lengthAdjust="spacingAndGlyphs">m</text>
<text class="s" x="152.1" y="299.5" font-size="19.3" fill="#BBBBBB"  textLength="75.4" lengthAdjust="spacingAndGlyphs">pom.xml</text>
<path d="M70.7 318.5 L77 325.0 L83.3 318.5" fill="none" stroke="#B3B3B3" stroke-width="1.9" />
<path d="M97 314.0 H106.7 L109.8 317.1 H118.2 V330.8 H97 Z" fill="#87939A"/>
<rect x="109" y="323.5" width="11.5" height="11.5" fill="#40B6E0" stroke="#3C3F41" stroke-width="1.2"/>
<text class="s" x="124" y="329.5" font-size="19.3" fill="#BBBBBB" font-weight="700"  textLength="110.1" lengthAdjust="spacingAndGlyphs">user-service</text>
<path d="M97.7 348.5 L104 355.0 L110.3 348.5" fill="none" stroke="#B3B3B3" stroke-width="1.9" />
<path d="M124 344.0 H133.7 L136.8 347.1 H145.2 V360.8 H124 Z" fill="#87939A"/>
<text class="s" x="151" y="359.5" font-size="19.3" fill="#BBBBBB"  textLength="25.599999999999994" lengthAdjust="spacingAndGlyphs">src</text>
<path d="M124.7 378.5 L131 385.0 L137.3 378.5" fill="none" stroke="#B3B3B3" stroke-width="1.9" />
<path d="M151 374.0 H160.7 L163.8 377.1 H172.2 V390.8 H151 Z" fill="#87939A"/>
<text class="s" x="178" y="389.5" font-size="19.3" fill="#BBBBBB"  textLength="44.80000000000001" lengthAdjust="spacingAndGlyphs">main</text>
<path d="M151.7 408.5 L158 415.0 L164.3 408.5" fill="none" stroke="#B3B3B3" stroke-width="1.9" />
<path d="M178 404.0 H187.7 L190.8 407.1 H199.2 V420.8 H178 Z" fill="#3E87A5"/>
<text class="s" x="204" y="419.5" font-size="19.3" fill="#BBBBBB"  textLength="36.80000000000001" lengthAdjust="spacingAndGlyphs">java</text>
<path d="M178.7 438.5 L185 445.0 L191.3 438.5" fill="none" stroke="#B3B3B3" stroke-width="1.9" />
<path d="M205 434.0 H214.7 L217.8 437.1 H226.2 V450.8 H205 Z" fill="#87939A"/>
<circle cx="212.5" cy="443.5" r="3" fill="#3C3F41"/>
<text class="s" x="232" y="449.5" font-size="19.3" fill="#BBBBBB"  textLength="111.30000000000001" lengthAdjust="spacingAndGlyphs">cn.itcast.user</text>
<path d="M205.7 468.5 L212 475.0 L218.3 468.5" fill="none" stroke="#B3B3B3" stroke-width="1.9" />
<path d="M232 464.0 H241.7 L244.8 467.1 H253.2 V480.8 H232 Z" fill="#87939A"/>
<circle cx="239.5" cy="473.5" r="3" fill="#3C3F41"/>
<text class="s" x="259" y="479.5" font-size="19.3" fill="#BBBBBB"  textLength="69.60000000000002" lengthAdjust="spacingAndGlyphs">mapper</text>
<circle cx="269.5" cy="503.0" r="10.5" fill="#548C42"/>
<path d="M266.9 498.0 H272.1 M269.5 498.0 V508.0 M266.9 508.0 H272.1" fill="none" stroke="#2A3A26" stroke-width="2"/>
<text class="s" x="286" y="509.5" font-size="19.3" fill="#BBBBBB"  textLength="108.60000000000002" lengthAdjust="spacingAndGlyphs">UserMapper</text>
<path d="M205.7 528.5 L212 535.0 L218.3 528.5" fill="none" stroke="#B3B3B3" stroke-width="1.9" />
<path d="M232 524.0 H241.7 L244.8 527.1 H253.2 V540.8 H232 Z" fill="#87939A"/>
<circle cx="239.5" cy="533.5" r="3" fill="#3C3F41"/>
<text class="s" x="259" y="539.5" font-size="19.3" fill="#BBBBBB"  textLength="40.39999999999998" lengthAdjust="spacingAndGlyphs">pojo</text>
<circle cx="269.5" cy="563.0" r="10.5" fill="#3E86A0"/>
<path d="M272.7 559.8 A4.5 4.5 0 1 0 272.7 566.2" fill="none" stroke="#1E3641" stroke-width="2"/>
<text class="s" x="286" y="569.5" font-size="19.3" fill="#BBBBBB"  textLength="39.19999999999999" lengthAdjust="spacingAndGlyphs">User</text>
<path d="M205.7 588.5 L212 595.0 L218.3 588.5" fill="none" stroke="#B3B3B3" stroke-width="1.9" />
<path d="M232 584.0 H241.7 L244.8 587.1 H253.2 V600.8 H232 Z" fill="#87939A"/>
<circle cx="239.5" cy="593.5" r="3" fill="#3C3F41"/>
<text class="s" x="259" y="599.5" font-size="19.3" fill="#BBBBBB"  textLength="59.5" lengthAdjust="spacingAndGlyphs">service</text>
<circle cx="269.5" cy="623.0" r="10.5" fill="#3E86A0"/>
<path d="M272.7 619.8 A4.5 4.5 0 1 0 272.7 626.2" fill="none" stroke="#1E3641" stroke-width="2"/>
<text class="s" x="285.7" y="629.5" font-size="19.3" fill="#BBBBBB"  textLength="99.30000000000001" lengthAdjust="spacingAndGlyphs">UserService</text>
<path d="M205.7 648.5 L212 655.0 L218.3 648.5" fill="none" stroke="#B3B3B3" stroke-width="1.9" />
<path d="M232 644.0 H241.7 L244.8 647.1 H253.2 V660.8 H232 Z" fill="#87939A"/>
<circle cx="239.5" cy="653.5" r="3" fill="#3C3F41"/>
<text class="s" x="260" y="659.5" font-size="19.3" fill="#BBBBBB"  textLength="36.69999999999999" lengthAdjust="spacingAndGlyphs">web</text>
<circle cx="269.5" cy="683.0" r="10.5" fill="#3E86A0"/>
<path d="M272.7 679.8 A4.5 4.5 0 1 0 272.7 686.2" fill="none" stroke="#1E3641" stroke-width="2"/>
<text class="s" x="285.7" y="689.5" font-size="19.3" fill="#BBBBBB"  textLength="126.19999999999999" lengthAdjust="spacingAndGlyphs">UserController</text>
<circle cx="242.5" cy="713.5" r="10.5" fill="#3E86A0"/>
<path d="M245.5 709.0 A4.5 4.5 0 1 0 245.5 717.0" fill="none" stroke="#1E3641" stroke-width="2"/>
<path d="M246 701.0 L254 706.5 L246 712.0 Z" fill="#499C54"/>
<path d="M247 713.0 L253 716.5 V723.0 L247 726.5 L241 723.0 V716.5 Z" fill="#9AA7B0" stroke="#3C3F41" stroke-width="1"/>
<circle cx="247" cy="719.8" r="2.6" fill="none" stroke="#3C3F41" stroke-width="1.2"/>
<text class="s" x="258.9" y="719.5" font-size="19.3" fill="#BBBBBB"  textLength="138.90000000000003" lengthAdjust="spacingAndGlyphs">UserApplication</text>
<path d="M151.7 738.5 L158 745.0 L164.3 738.5" fill="none" stroke="#B3B3B3" stroke-width="1.9" />
<path d="M178 734.0 H187.7 L190.8 737.1 H199.2 V750.8 H178 Z" fill="#87939A"/>
<rect x="191" y="743.5" width="10" height="11" fill="#3C3F41"/>
<rect x="192.5" y="745.0" width="8" height="1.5" fill="#E0A23A"/>
<rect x="192.5" y="747.6" width="8" height="1.5" fill="#E0A23A"/>
<rect x="192.5" y="750.2" width="8" height="1.5" fill="#E0A23A"/>
<rect x="192.5" y="752.8" width="8" height="1.5" fill="#E0A23A"/>
<text class="s" x="205" y="749.5" font-size="19.3" fill="#BBBBBB"  textLength="82.69999999999999" lengthAdjust="spacingAndGlyphs">resources</text>
<path d="M205 780.5 Q204 769.5 216 767.0 Q221 766.0 224 763.5 Q226 774.5 220 778.5 Q213 782.5 205 780.5 Z" fill="#5A9E4B"/>
<path d="M220 772.0 L226.5 775.7 V783.0 L220 786.7 L213.5 783.0 V775.7 Z" fill="#9AA7B0" stroke="#3C3F41" stroke-width="1"/>
<circle cx="220" cy="779.3" r="2.8" fill="none" stroke="#3C3F41" stroke-width="1.3"/>
<path d="M220 775.5 V779.0" stroke="#3C3F41" stroke-width="1.3"/>
<text class="s" x="232" y="779.5" font-size="19.3" fill="#BBBBBB"  textLength="133.8" lengthAdjust="spacingAndGlyphs">application.yml</text>
<path d="M127.8 795.7 L134.3 802.0 L127.8 808.3" fill="none" stroke="#B3B3B3" stroke-width="1.9" />
<path d="M151 794.0 H160.7 L163.8 797.1 H172.2 V810.8 H151 Z" fill="#87939A"/>
<text class="s" x="178.2" y="809.5" font-size="19.3" fill="#BBBBBB"  textLength="32.80000000000001" lengthAdjust="spacingAndGlyphs">test</text>
<path d="M100.8 825.7 L107.3 832.0 L100.8 838.3" fill="none" stroke="#B3B3B3" stroke-width="1.9" />
<path d="M124 824.0 H133.7 L136.8 827.1 H145.2 V840.8 H124 Z" fill="#B35E2C"/>
<text class="s" x="151.3" y="839.5" font-size="19.3" fill="#BBBBBB"  textLength="54.5" lengthAdjust="spacingAndGlyphs">target</text>
<text class="s" x="124.5" y="870.5" font-size="23" font-weight="700" font-style="italic" fill="#3B9CC4" stroke="#3B9CC4" stroke-width="0.9" textLength="22" lengthAdjust="spacingAndGlyphs">m</text>
<text class="s" x="151.3" y="869.5" font-size="19.3" fill="#BBBBBB"  textLength="75.0" lengthAdjust="spacingAndGlyphs">pom.xml</text>
<text class="s" x="97.5" y="900.5" font-size="23" font-weight="700" font-style="italic" fill="#3B9CC4" stroke="#3B9CC4" stroke-width="0.9" textLength="22" lengthAdjust="spacingAndGlyphs">m</text>
<text class="s" x="124.4" y="899.5" font-size="19.3" fill="#BBBBBB"  textLength="75.0" lengthAdjust="spacingAndGlyphs">pom.xml</text>
<path d="M46.8 915.7 L53.3 922.0 L46.8 928.3" fill="none" stroke="#B3B3B3" stroke-width="1.9" />
<g><rect x="70" y="916.0" width="2.5" height="16" fill="#AFB1B3"/><rect x="75" y="914.0" width="2.5" height="18" fill="#AFB1B3"/><rect x="80" y="916.0" width="2.5" height="16" fill="#62B543"/><rect x="85" y="914.0" width="2.5" height="18" fill="#AFB1B3"/><rect x="89" y="919.0" width="2.5" height="13" fill="#40B6E0"/></g>
<text class="s" x="97.6" y="929.5" font-size="19.3" fill="#BBBBBB"  textLength="147.9" lengthAdjust="spacingAndGlyphs">External Libraries</text>
<g><path d="M70 943.0 H87 V957.0 H70 Z" fill="#AFB1B3"/><path d="M73 946.0 L77 949.0 L73 952.0" stroke="#3C3F41" stroke-width="1.5" fill="none"/><circle cx="85" cy="959.0" r="7.5" fill="#40B6E0" stroke="#3C3F41" stroke-width="1.2"/><path d="M85 954.5 V959.5 L88 962.0" stroke="#1E3641" stroke-width="1.6" fill="none"/></g>
<text class="s" x="97.6" y="959.5" font-size="19.3" fill="#BBBBBB"  textLength="200.4" lengthAdjust="spacingAndGlyphs">Scratches and Consoles</text>
<svg x="0" y="127" width="550" height="40" overflow="hidden"><text class="s" x="217" y="22.5" font-size="19.3" fill="#8C8C8C" textLength="230" lengthAdjust="spacingAndGlyphs">F:\BaiduNetdiskDownload\</text><path d="M1.5 2 L3.5 4 M1.5 8.5 L4 6.5 M8 1 L6.5 4 M7.5 3 H16 L14 6 M11 3.5 Q10.5 6.5 6.5 8.5 M11.5 5.5 Q13.5 7.5 18 8.5 M5 10.5 H15 V16 H5 Z M10 10.5 V15 M8.5 16.5 L4.5 19 M11.5 16.5 L16 19" transform="translate(448,7) scale(0.875)" fill="none" stroke="#8C8C8C" stroke-width="1.5999999999999999" stroke-linecap="round" stroke-linejoin="round"/><path d="M3.5 2 L4.5 4.5 M9 2 L8 4.5 M1.5 6.5 H10 M6 1 V19 M6 7.5 L2 13 M6 7.5 L10 12 M12.5 3 L14.5 5 M12 7.5 L14 9.5 M10.5 13 H19 M16 1 V19" transform="translate(466,7) scale(0.875)" fill="none" stroke="#8C8C8C" stroke-width="1.5999999999999999" stroke-linecap="round" stroke-linejoin="round"/><text class="s" x="484" y="22.5" font-size="19.3" fill="#8C8C8C">\cloud-demo</text></svg>
<rect x="35" y="1056" width="466" height="12" fill="#5B5B5B" />
<text class="s" x="41.5" y="1097" font-size="19.3" fill="#BBBBBB"  textLength="69" lengthAdjust="spacingAndGlyphs">Services</text>
<g fill="none" stroke="#AFB1B3" stroke-width="1.9"><circle cx="2420" cy="1091" r="9.5"/><path d="M2420 1081.5 V1087 M2420 1095 V1100.5 M2410.5 1091 H2416 M2424 1091 H2429.5"/></g>
<rect x="2444.5" y="1075" width="1.2" height="30" fill="#55606B" />
<g transform="translate(2469,1091)"><circle r="6.5" fill="none" stroke="#AFB1B3" stroke-width="4.5"/><rect x="-2" y="-10" width="4" height="4" fill="#AFB1B3" transform="rotate(0)"/><rect x="-2" y="-10" width="4" height="4" fill="#AFB1B3" transform="rotate(45)"/><rect x="-2" y="-10" width="4" height="4" fill="#AFB1B3" transform="rotate(90)"/><rect x="-2" y="-10" width="4" height="4" fill="#AFB1B3" transform="rotate(135)"/><rect x="-2" y="-10" width="4" height="4" fill="#AFB1B3" transform="rotate(180)"/><rect x="-2" y="-10" width="4" height="4" fill="#AFB1B3" transform="rotate(225)"/><rect x="-2" y="-10" width="4" height="4" fill="#AFB1B3" transform="rotate(270)"/><rect x="-2" y="-10" width="4" height="4" fill="#AFB1B3" transform="rotate(315)"/><circle r="2.5" fill="#3A4655"/></g>
<rect x="2499" y="1090" width="18" height="2.4" fill="#AFB1B3" />
<g><path d="M62 1128 A9 9 0 1 0 55 1144" fill="none" stroke="#499C54" stroke-width="3"/><path d="M58 1123.5 L66 1128.5 L58 1133.5 Z" fill="#499C54"/><rect x="56" y="1137" width="9" height="8" fill="#AFB1B3"/></g>
<g fill="#499C54"><ellipse cx="53" cy="1174" rx="6" ry="8"/><path d="M46 1163 L50 1167 M60 1163 L56 1167 M45 1171 H61 M45 1177 H61 M47 1183 L50 1180" stroke="#499C54" stroke-width="2.2"/><rect x="53" y="1176" width="10" height="8" fill="#AFB1B3"/></g>
<rect x="46" y="1204.7" width="16.2" height="14.5" fill="#C75450" />
<path d="M45.5 1258.5 L55 1249" stroke="#AFB1B3" stroke-width="4.6" stroke-linecap="round"/><circle cx="58.5" cy="1246.5" r="6.8" fill="#AFB1B3"/><path d="M58.5 1246.5 L63 1239 L67 1243.5 Z" fill="#3C3F41"/><circle cx="62" cy="1243" r="3" fill="#3C3F41"/>
<rect x="39" y="1274.5" width="30" height="1.5" fill="#555759" />
<g fill="#499C54"><ellipse cx="53" cy="1302" rx="5.5" ry="7.5"/><path d="M47 1292 L51 1295 M59 1292 L55 1295 M45 1299 H58 M45 1305 H55" stroke="#499C54" stroke-width="2"/></g><path d="M57 1312 L65 1304 M59 1304 H65 V1310" stroke="#AFB1B3" stroke-width="2.2" fill="none"/>
<g><rect x="43" y="1335" width="21.5" height="14" fill="#AFB1B3"/><rect x="48" y="1331.5" width="11" height="4" fill="#AFB1B3"/><circle cx="54" cy="1342" r="4" fill="none" stroke="#3C3F41" stroke-width="1.8"/></g>
<path d="M48 1370 H63.5 V1388 H48 V1383" fill="none" stroke="#AFB1B3" stroke-width="2"/><path d="M43 1379 H54 M50 1374 L55 1379 L50 1384" stroke="#C75450" stroke-width="2.4" fill="none"/>
<circle cx="51.5" cy="1415" r="7" fill="none" stroke="#AFB1B3" stroke-width="1.6"/><path d="M54 1413 L64 1421 L58 1422 L60 1428 Z" fill="#AFB1B3"/>
<text class="s" x="49" y="1456" font-size="16" fill="#AFB1B3" >»</text>
<g fill="#AFB1B3"><rect x="87" y="1123" width="18" height="2"/><rect x="87" y="1142" width="18" height="2"/><path d="M90 1131 L96 1126.5 L102 1131 Z"/><path d="M90 1136 L96 1140.5 L102 1136 Z"/><rect x="126" y="1132.5" width="18" height="2"/><path d="M129.5 1124.5 H140.5 L135 1130 Z"/><path d="M129.5 1142 H140.5 L135 1136.5 Z"/></g>
<rect x="159.5" y="1118" width="1.2" height="28" fill="#555759" />
<g fill="#AFB1B3"><rect x="177" y="1125" width="6.5" height="6.5"/><rect x="185.5" y="1125" width="6.5" height="6.5"/><rect x="177" y="1133.5" width="6.5" height="6.5"/><rect x="185.5" y="1133.5" width="6.5" height="6.5"/><path d="M189 1141 H197.5 L193.2 1145.5 Z"/><path d="M214.7 1125 H233 L226 1133 V1142 L221.5 1142 V1133 Z"/><path d="M226 1142 H236.4" stroke="#AFB1B3" stroke-width="1.6"/></g>
<path d="M251 1142 Q253 1141 253 1137 V1130 Q253 1123 260 1123 H266 Q273 1123 273 1130 V1137 Q273 1141 275 1142" fill="none" stroke="#AFB1B3" stroke-width="1.8"/><path d="M263 1127.5 V1139 M257.5 1133 H268.5" stroke="#AFB1B3" stroke-width="2"/>
<rect x="287.5" y="1118" width="1.2" height="28" fill="#555759" />
<path d="M312 1124 V1141 M304 1132.5 H320.5" stroke="#AFB1B3" stroke-width="2.6"/><path d="M318 1141 H326 L322 1145 Z" fill="#AFB1B3"/>
<rect x="76" y="1215" width="735" height="30" fill="#4B6EAF" />
<path d="M88.0 1166.0 L94.3 1172.5 L100.6 1166.0" fill="none" stroke="#B3B3B3" stroke-width="1.9" />
<path d="M114.5 1178.0 Q113.5 1167.0 125.5 1164.5 Q130.5 1163.5 133.5 1161.0 Q135.5 1172.0 129.5 1176.0 Q122.5 1180.0 114.5 1178.0 Z" fill="#5A9E4B"/>
<path d="M129.5 1169.5 L136.0 1173.2 V1180.5 L129.5 1184.2 L123.0 1180.5 V1173.2 Z" fill="#9AA7B0" stroke="#3C3F41" stroke-width="1"/>
<circle cx="129.5" cy="1176.8" r="2.8" fill="none" stroke="#3C3F41" stroke-width="1.3"/>
<path d="M129.5 1173.0 V1176.5" stroke="#3C3F41" stroke-width="1.3"/>
<text class="s" x="141" y="1178.0" font-size="19.3" fill="#BBBBBB"  textLength="103" lengthAdjust="spacingAndGlyphs">Spring Boot</text>
<path d="M114.9 1195.8 L121.2 1202.3 L127.5 1195.8" fill="none" stroke="#B3B3B3" stroke-width="1.9" />
<path d="M145.8 1191 L160.3 1200 L145.8 1208.7 Z" fill="#499C54" />
<text class="s" x="168.3" y="1207.8" font-size="19.3" fill="#BBBBBB"  textLength="73" lengthAdjust="spacingAndGlyphs">Running</text>
<path d="M173.1 1219.5 L187.6 1228 L173.1 1236.5 Z" fill="#499C54" />
<text class="s" x="195" y="1236.9" font-size="19.3" fill="#D8D8D8" font-weight="700"  textLength="156.5" lengthAdjust="spacingAndGlyphs">OrderApplication</text>
<text class="s" x="354" y="1236.9" font-size="19.3" fill="#D8D8D8"  textLength="58" lengthAdjust="spacingAndGlyphs">:8080/</text>
<rect x="355" y="1238.8" width="56.5" height="1.3" fill="#D8D8D8" />
<path d="M173.1 1250 L187.6 1258.5 L173.1 1267 Z" fill="#499C54" />
<text class="s" x="195" y="1267.4" font-size="19.3" fill="#BBBBBB" font-weight="700"  textLength="144" lengthAdjust="spacingAndGlyphs">UserApplication</text>
<text class="s" x="343" y="1267.4" font-size="19.3" fill="#589DF6"  textLength="56.5" lengthAdjust="spacingAndGlyphs">:8081/</text>
<text class="s" x="832.3" y="1140.2" font-size="18" fill="#BBBBBB"  textLength="62.3" lengthAdjust="spacingAndGlyphs">Console</text>
<g fill="#C15B28"><circle cx="941.5" cy="1124" r="3.6"/><circle cx="935.5" cy="1140" r="3.6"/><circle cx="948.5" cy="1140" r="3.6"/></g><path d="M935.5 1140 L941.5 1124 L948.5 1140 M932 1131 L935.5 1140 M951.5 1131 L948.5 1140" stroke="#C15B28" stroke-width="1.8" fill="none"/>
<text class="s" x="961" y="1140.2" font-size="18" fill="#BBBBBB"  textLength="67.3" lengthAdjust="spacingAndGlyphs">Actuator</text>
<rect x="830.8" y="1451" width="791" height="11.5" fill="#4A4A4A" />
<rect x="2471" y="1358.5" width="12" height="105" fill="#4A4A4A" />
<svg x="813" y="1155.5" width="1671.5" height="308.5" overflow="hidden">
<text class="m" y="14.900000000000091" font-size="20"><tspan x="16.0" fill="#BBBBBB">08-31 09:36:28:566</tspan><tspan x="256.0" fill="#6A9E2F">INFO</tspan><tspan x="316.0" fill="#B381C5">24408</tspan><tspan x="388.0" fill="#BBBBBB">--- [           main]</tspan><tspan x="652.0" fill="#20A3A6">o.a.catalina.core.AprLifecycleListener  </tspan><tspan x="1144.0" fill="#BBBBBB">: APR capabilities: IPv6 [true], sendfile [true], accept filters [false], random [true]</tspan></text>
<text class="m" y="47.90000000000009" font-size="20"><tspan x="16.0" fill="#BBBBBB">08-31 09:36:28:566</tspan><tspan x="256.0" fill="#6A9E2F">INFO</tspan><tspan x="316.0" fill="#B381C5">24408</tspan><tspan x="388.0" fill="#BBBBBB">--- [           main]</tspan><tspan x="652.0" fill="#20A3A6">o.a.catalina.core.AprLifecycleListener  </tspan><tspan x="1144.0" fill="#BBBBBB">: APR/OpenSSL configuration: useAprConnector [false], useOpenSSL [true]</tspan></text>
<text class="m" y="80.90000000000009" font-size="20"><tspan x="16.0" fill="#BBBBBB">08-31 09:36:28:568</tspan><tspan x="256.0" fill="#6A9E2F">INFO</tspan><tspan x="316.0" fill="#B381C5">24408</tspan><tspan x="388.0" fill="#BBBBBB">--- [           main]</tspan><tspan x="652.0" fill="#20A3A6">o.a.catalina.core.AprLifecycleListener  </tspan><tspan x="1144.0" fill="#BBBBBB">: OpenSSL successfully initialized [OpenSSL 1.1.1l  24 Aug 2021]</tspan></text>
<text class="m" y="113.90000000000009" font-size="20"><tspan x="16.0" fill="#BBBBBB">08-31 09:36:28:610</tspan><tspan x="256.0" fill="#6A9E2F">INFO</tspan><tspan x="316.0" fill="#B381C5">24408</tspan><tspan x="388.0" fill="#BBBBBB">--- [           main]</tspan><tspan x="652.0" fill="#20A3A6">o.a.c.c.C.[Tomcat].[localhost].[/]      </tspan><tspan x="1144.0" fill="#BBBBBB">: Initializing Spring embedded WebApplicationContext</tspan></text>
<text class="m" y="146.9000000000001" font-size="20"><tspan x="16.0" fill="#BBBBBB">08-31 09:36:28:610</tspan><tspan x="256.0" fill="#6A9E2F">INFO</tspan><tspan x="316.0" fill="#B381C5">24408</tspan><tspan x="388.0" fill="#BBBBBB">--- [           main]</tspan><tspan x="652.0" fill="#20A3A6">w.s.c.ServletWebServerApplicationContext</tspan><tspan x="1144.0" fill="#BBBBBB">: Root WebApplicationContext: initialization completed in 849 ms</tspan></text>
<text class="m" y="179.9000000000001" font-size="20"><tspan x="16.0" fill="#BBBBBB">08-31 09:36:28:770</tspan><tspan x="256.0" fill="#6A9E2F">INFO</tspan><tspan x="316.0" fill="#B381C5">24408</tspan><tspan x="388.0" fill="#BBBBBB">--- [           main]</tspan><tspan x="652.0" fill="#20A3A6">o.s.s.concurrent.ThreadPoolTaskExecutor </tspan><tspan x="1144.0" fill="#BBBBBB">: Initializing ExecutorService &#x27;applicationTaskExecutor&#x27;</tspan></text>
<text class="m" y="212.9000000000001" font-size="20"><tspan x="16.0" fill="#BBBBBB">08-31 09:36:28:887</tspan><tspan x="256.0" fill="#6A9E2F">INFO</tspan><tspan x="316.0" fill="#B381C5">24408</tspan><tspan x="388.0" fill="#BBBBBB">--- [           main]</tspan><tspan x="652.0" fill="#20A3A6">o.s.b.w.embedded.tomcat.TomcatWebServer </tspan><tspan x="1144.0" fill="#BBBBBB">: Tomcat started on port(s): 8080 (http) with context path &#x27;&#x27;</tspan></text>
<text class="m" y="245.9000000000001" font-size="20"><tspan x="16.0" fill="#BBBBBB">08-31 09:36:28:894</tspan><tspan x="256.0" fill="#6A9E2F">INFO</tspan><tspan x="316.0" fill="#B381C5">24408</tspan><tspan x="388.0" fill="#BBBBBB">--- [           main]</tspan><tspan x="652.0" fill="#20A3A6">cn.itcast.order.OrderApplication        </tspan><tspan x="1144.0" fill="#BBBBBB">: Started OrderApplication in 1.034 seconds (JVM running for 1.567)</tspan></text>
</svg>
<path d="M2507 1187.4 V1170 M2500 1176.5 L2507 1169.5 L2514 1176.5" stroke="#AFB1B3" stroke-width="2.2" fill="none"/>
<path d="M2507 1207.6 V1225 M2500 1218.5 L2507 1225.5 L2514 1218.5" stroke="#AFB1B3" stroke-width="2.2" fill="none"/>
<path d="M2498 1248 H2516 M2498 1256 H2512 Q2516 1256 2516 1260 Q2516 1264 2512 1264 H2506 M2509 1261 L2506 1264 L2509 1267 M2498 1264 H2501" stroke="#AFB1B3" stroke-width="2" fill="none"/>
<rect x="2490" y="1278.2" width="33" height="32.3" rx="4" fill="#5C6164"/><path d="M2498 1285 H2503 M2498 1290 H2503 M2498 1300.5 H2516 M2511 1283 V1296 M2506.5 1291.5 L2511 1296 L2515.5 1291.5" stroke="#AFB1B3" stroke-width="2" fill="none"/>
<g fill="#AFB1B3"><rect x="2501" y="1325" width="11" height="4"/><rect x="2496" y="1330.5" width="21.5" height="8.5" rx="1"/><rect x="2500.5" y="1337" width="12" height="8" fill="none" stroke="#AFB1B3" stroke-width="1.6"/></g>
<g fill="#AFB1B3"><rect x="2499" y="1365" width="16" height="2.5"/><rect x="2504" y="1362.5" width="6" height="2.5"/><path d="M2500.5 1369 H2513.5 V1380 Q2513.5 1382 2511.5 1382 H2502.5 Q2500.5 1382 2500.5 1380 Z"/></g>
<rect x="563" y="1466" width="115" height="31" fill="#2B2D2E" />
<g fill="#AFB1B3"><circle cx="55.5" cy="1476" r="2.6"/><circle cx="55.5" cy="1490.5" r="2.6"/><circle cx="63" cy="1479" r="2.6"/></g><path d="M55.5 1476 V1490.5 M63 1479 Q63 1485 55.5 1487" stroke="#AFB1B3" stroke-width="2" fill="none"/>
<text class="s" x="74.2" y="1489.3" font-size="17" fill="#BBBBBB"  textLength="120.5" lengthAdjust="spacingAndGlyphs">Version Control</text>
<g fill="#AFB1B3"><rect x="229" y="1476" width="3" height="2.5"/><rect x="233.5" y="1476" width="12" height="2.5"/><rect x="229" y="1481" width="3" height="2.5"/><rect x="233.5" y="1481" width="12" height="2.5"/><rect x="229" y="1486" width="3" height="2.5"/><rect x="233.5" y="1486" width="12" height="2.5"/></g>
<text class="s" x="252" y="1489.3" font-size="17" fill="#BBBBBB"  textLength="47" lengthAdjust="spacingAndGlyphs">TODO</text>
<circle cx="338" cy="1482" r="8" fill="#AFB1B3"/><rect x="336.7" y="1476" width="2.6" height="7" fill="#3C3F41"/><rect x="336.7" y="1485" width="2.6" height="2.6" fill="#3C3F41"/>
<text class="s" x="353.7" y="1489.3" font-size="17" fill="#BBBBBB"  textLength="72" lengthAdjust="spacingAndGlyphs">Problems</text>
<rect x="457" y="1475" width="17.5" height="15" fill="#AFB1B3"/><path d="M460 1478 L464 1481 L460 1484 M465 1487 H471" stroke="#3C3F41" stroke-width="1.5" fill="none"/>
<text class="s" x="481.5" y="1489.3" font-size="17" fill="#BBBBBB"  textLength="66.5" lengthAdjust="spacingAndGlyphs">Terminal</text>
<path d="M584 1474.5 H594 L598.5 1482 L594 1490 H584 L579.5 1482 Z" fill="#AFB1B3"/><path d="M586 1477.5 L592.5 1482 L586 1486.5 Z" fill="#2B2D2E"/><circle cx="595.5" cy="1489" r="3" fill="#3BD64A"/>
<text class="s" x="604.4" y="1489.3" font-size="17" fill="#FFFFFF"  textLength="61.3" lengthAdjust="spacingAndGlyphs">Services</text>
<circle cx="701" cy="1481" r="7" fill="none" stroke="#AFB1B3" stroke-width="1.6"/><path d="M704 1481 L712 1486.5 L704 1492 Z" fill="#AFB1B3"/><path d="M701 1477 V1481.5 L698.5 1484" stroke="#AFB1B3" stroke-width="1.4" fill="none"/>
<text class="s" x="718.5" y="1489.3" font-size="17" fill="#BBBBBB"  textLength="56" lengthAdjust="spacingAndGlyphs">Profiler</text>
<path d="M804 1481 L812 1474 L815 1476 L811 1480 L823 1490 L820.5 1492.5 L808.5 1482.5 L806.5 1484 Z" fill="#AFB1B3"/>
<text class="s" x="829" y="1489.3" font-size="17" fill="#BBBBBB"  textLength="39.3" lengthAdjust="spacingAndGlyphs">Build</text>
<path d="M21.5 1506 H36 V1519.5 H21.5 Z" fill="none" stroke="#AFB1B3" stroke-width="1.5"/><path d="M18.5 1509 V1522.5 H32.5" fill="none" stroke="#AFB1B3" stroke-width="1.5"/>
<text class="s" x="58.3" y="1519.4" font-size="19" fill="#BBBBBB"  textLength="332" lengthAdjust="spacingAndGlyphs">All files are up-to-date (moments ago)</text>
<text class="s" x="2235.5" y="1519.5" font-size="19" fill="#BBBBBB"  textLength="48" lengthAdjust="spacingAndGlyphs">12:14</text>
<text class="s" x="2300.5" y="1519.5" font-size="19" fill="#BBBBBB"  textLength="44" lengthAdjust="spacingAndGlyphs">CRLF</text>
<text class="s" x="2362.3" y="1519.5" font-size="19" fill="#BBBBBB"  textLength="53" lengthAdjust="spacingAndGlyphs">UTF-8</text>
<text class="s" x="2432" y="1519.5" font-size="19" fill="#BBBBBB"  textLength="74.5" lengthAdjust="spacingAndGlyphs">4 spaces</text>
<path d="M2526 1513 V1509 Q2526 1504.5 2530.5 1504.5 Q2535 1504.5 2535 1509" fill="none" stroke="#AFB1B3" stroke-width="2"/><rect x="2528.5" y="1512" width="11.5" height="9.5" fill="#AFB1B3"/>
<rect x="78.5" y="184.5" width="205" height="38" fill="none" stroke="#FC3434" stroke-width="7"/>
<rect x="82.5" y="308.5" width="190" height="36" fill="none" stroke="#FC3434" stroke-width="7"/>
<polygon points="61.8,205.6 234.2,1187.2 228.8,1188.2 243.0,1208.0 249.4,1184.5 244.0,1185.5 62.6,205.4" fill="#FC3434"/>
<polygon points="235.0,332.0 300.3,1238.1 294.8,1238.6 307.0,1259.7 315.8,1237.0 310.3,1237.4 235.8,332.0" fill="#FC3434"/>
</svg>
</body></html>
